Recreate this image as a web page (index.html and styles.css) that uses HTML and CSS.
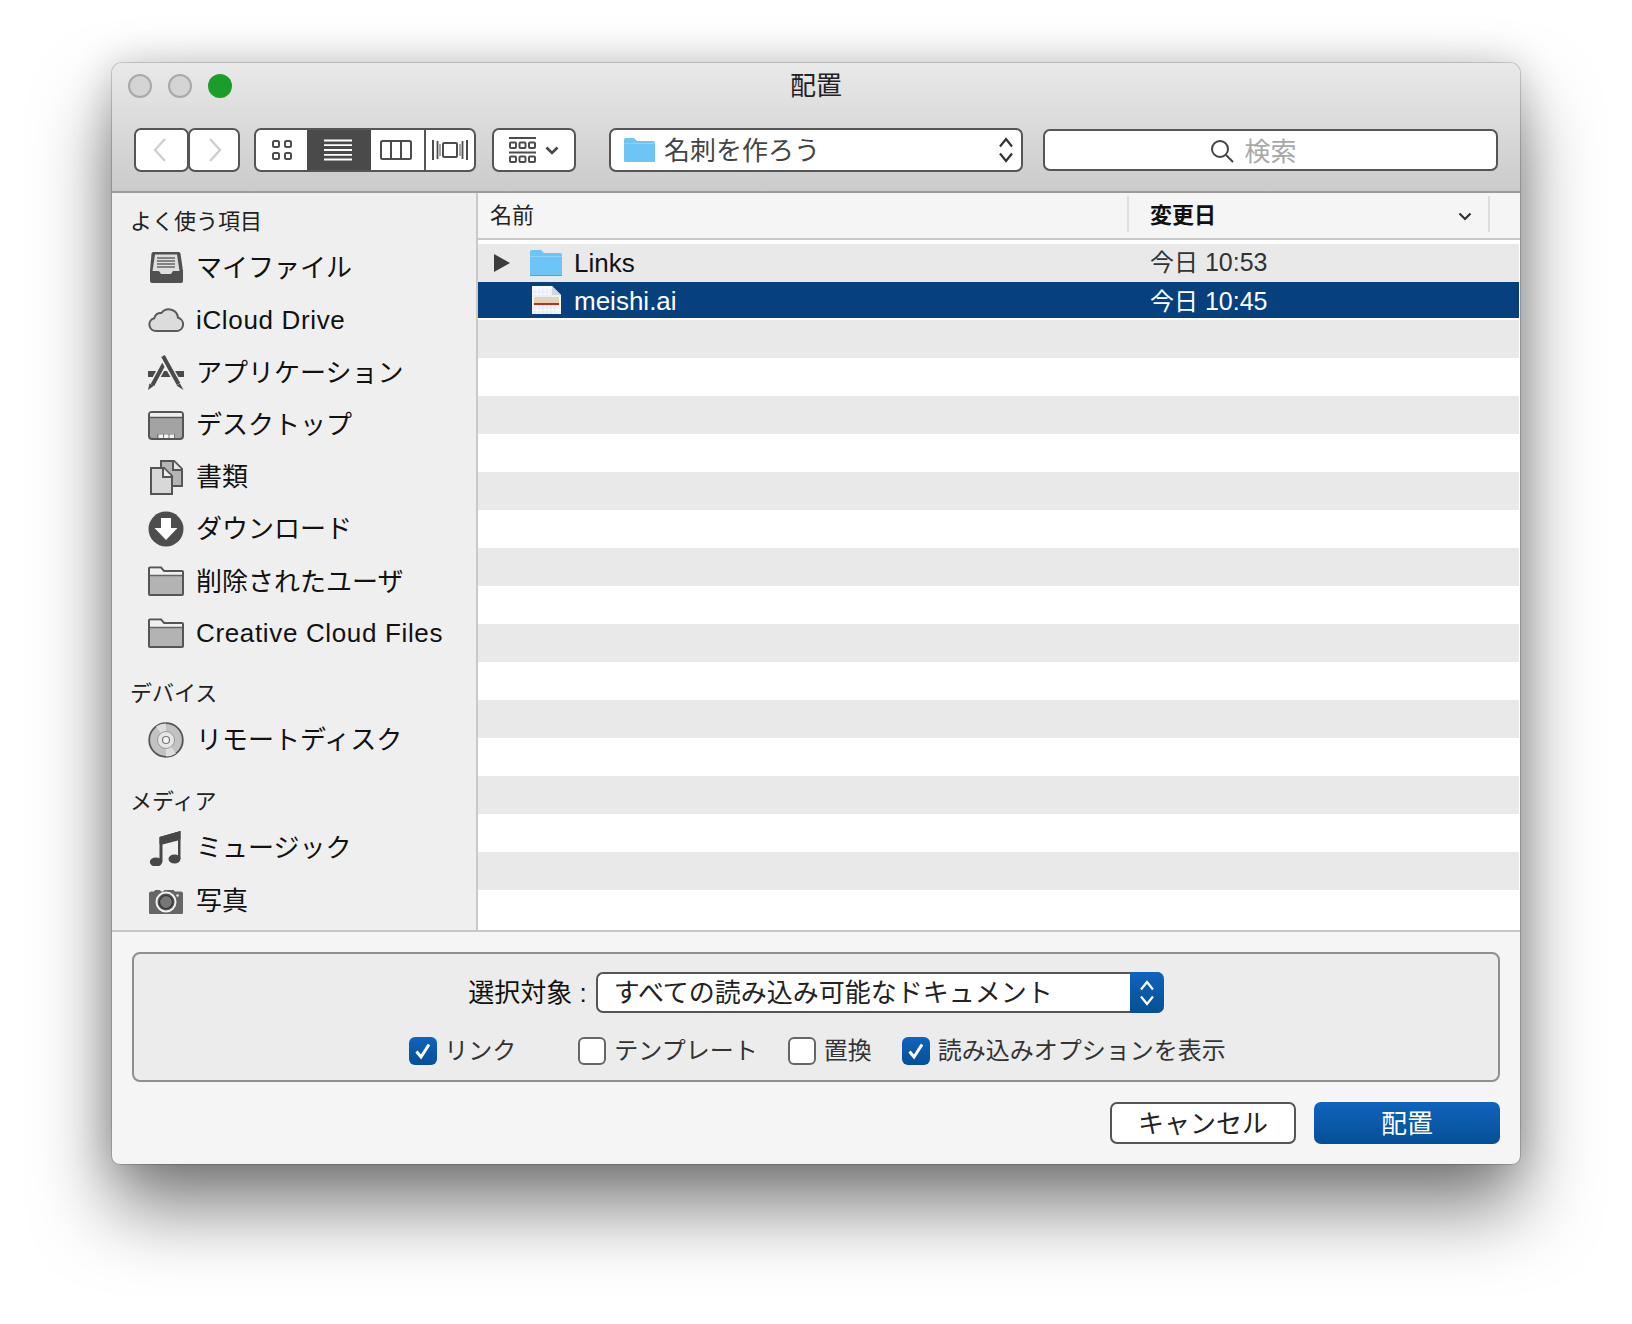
FILE: index.html
```html
<!DOCTYPE html>
<html lang="ja">
<head>
    <meta charset="UTF-8">
    <title>配置</title>
    <link rel="stylesheet" href="styles.css">
</head>
<body>
    <div class="window">
        <div class="titlebar">
            <div class="title-row">
                <div class="lights">
                    <span class="light"></span>
                    <span class="light"></span>
                    <span class="light green"></span>
                </div>
                <div class="title">配置</div>
            </div>
            <div class="toolbar">
                <div class="seg nav-back"><svg width="13" height="24" viewBox="0 0 13 24"><path d="M12 1L2 12l10 11" fill="none" stroke="#cfcfcf" stroke-width="2.4"/></svg></div>
                <div class="seg nav-fwd"><svg width="13" height="24" viewBox="0 0 13 24"><path d="M1 1l10 11L1 23" fill="none" stroke="#cfcfcf" stroke-width="2.4"/></svg></div>
                <div class="seg views">
                    <div class="seg-btn v1">
                        <svg width="20" height="20" viewBox="0 0 20 20" fill="none" stroke="#4c4c4c" stroke-width="2"><rect x="1" y="1" width="6" height="6" rx="1.5"/><rect x="13" y="1" width="6" height="6" rx="1.5"/><rect x="1" y="13" width="6" height="6" rx="1.5"/><rect x="13" y="13" width="6" height="6" rx="1.5"/></svg>
                    </div>
                    <div class="seg-btn v2 on">
                        <svg width="28" height="22" viewBox="0 0 28 22" stroke="#fff" stroke-width="1.8"><path d="M0 1.500h28M0 6.200h28M0 11h28M0 15.800h28M0 20.500h28"/></svg>
                    </div>
                    <div class="seg-btn v3">
                        <svg width="32" height="20" viewBox="0 0 32 20" fill="none" stroke="#4c4c4c" stroke-width="2"><rect x="1" y="1" width="30" height="18" rx="1.5"/><path d="M11 1v18M21 1v18"/></svg>
                    </div>
                    <div class="seg-btn v4">
                        <svg width="36" height="22" viewBox="0 0 36 22" fill="none" stroke="#4c4c4c" stroke-width="2"><rect x="11" y="4" width="14" height="14" rx="1"/><path d="M1 1v20M35 1v20"/><path d="M5.500 2v18M30.500 2v18" stroke-width="1.800"/><path d="M8 5v12M28 5v12" stroke-width="1"/></svg>
                    </div>
                </div>
                <div class="seg arrange">
                    <svg width="27" height="26" viewBox="0 0 27 26" fill="none" stroke="#4c4c4c" stroke-width="2"><path d="M0 1h27M0 15.500h27"/><rect x="1" y="5.500" width="6" height="5.500" rx="1"/><rect x="10.500" y="5.500" width="6" height="5.500" rx="1"/><rect x="20" y="5.500" width="6" height="5.500" rx="1"/><rect x="1" y="19.500" width="6" height="5.500" rx="1"/><rect x="10.500" y="19.500" width="6" height="5.500" rx="1"/><rect x="20" y="19.500" width="6" height="5.500" rx="1"/></svg>
                    <svg class="arrange-arrow" width="14" height="9" viewBox="0 0 14 9"><path d="M1.500 1.500L7 7l5.500-5.500" fill="none" stroke="#444" stroke-width="2.600"/></svg>
                </div>
                <div class="seg path-pop">
                    <svg width="31" height="24" viewBox="0 0 31 24"><path d="M1 24a1 1 0 0 1-1-1V2a2 2 0 0 1 2-2h8l3 3h16a2 2 0 0 1 2 2v18a1 1 0 0 1-1 1z" fill="#6dc5f6"/><path d="M0 5h31v1H0z" fill="#8ed4fa"/></svg>
                    <span class="path-name">名刺を作ろう</span>
                    <svg class="stepper" width="16" height="26" viewBox="0 0 16 26" fill="none" stroke="#333" stroke-width="2.200"><path d="M2 9.500L8 2l6 7.500M2 16.500L8 24l6-7.500"/></svg>
                </div>
                <div class="search">
                    <svg width="24" height="24" viewBox="0 0 24 24" fill="none" stroke="#444" stroke-width="2"><circle cx="10" cy="10" r="8"/><path d="M16 16l7 7"/></svg>
                    <span>検索</span>
                </div>
            </div>
        </div>

        <div class="content">
            <div class="sidebar">
                <div class="side-label">よく使う項目</div>
                <div class="side-item">
                    <svg class="side-icon" viewBox="0 0 36 36"><path d="M5.500 2h25a2 2 0 0 1 2 1.600L35 21v10a2 2 0 0 1-2 2H4a2 2 0 0 1-2-2V21L3.500 3.600a2 2 0 0 1 2-1.600z" fill="#505050"/><path d="M7 4.500h22l2.500 16.500H25l-2 3H13l-2-3H4.500z" fill="#dedede"/><path d="M9 8h18M9 11h18M9 14h18M9 17h18" stroke="#666" stroke-width="1.300"/></svg>
                    <span class="jp">マイファイル</span>
                </div>
                <div class="side-item">
                    <svg class="side-icon" viewBox="0 0 36 36"><path d="M8 29a6.500 6.500 0 0 1-1.700-12.800A6.200 6.200 0 0 1 13.500 11 9.200 9.200 0 0 1 30 15.800 6.700 6.700 0 0 1 28.500 29z" fill="#dcdcdc" stroke="#5a5a5a" stroke-width="2"/></svg>
                    <span class="latin">iCloud Drive</span>
                </div>
                <div class="side-item">
                    <svg class="side-icon" viewBox="0 0 36 36"><path d="M0 16h36v6H0z" fill="#4a4a4a"/><path d="M18.500 4L4.500 30" stroke="#efefef" stroke-width="7" fill="none"/><path d="M18.500 4L4.500 30" stroke="#4a4a4a" stroke-width="4" fill="none"/><path d="M0 35l1.500-6.500 4.500 2.300z" fill="#4a4a4a"/><path d="M15 2l15.500 27" stroke="#efefef" stroke-width="7" fill="none"/><path d="M15 1l15.500 28" stroke="#4a4a4a" stroke-width="4" fill="none"/><path d="M28.500 30.500l3.500-2 3.500 6.500z" fill="#4a4a4a"/></svg>
                    <span class="jp">アプリケーション</span>
                </div>
                <div class="side-item">
                    <svg class="side-icon" viewBox="0 0 36 36"><rect x="1" y="5" width="34" height="27" rx="3" fill="#a3a3a3" stroke="#555" stroke-width="2"/><path d="M2 6.500a2 2 0 0 1 2-.5h28a2 2 0 0 1 2 .5V10H2z" fill="#eee"/><path d="M2 10.500h32" stroke="#555" stroke-width="1.500"/><path d="M9 27h18v4H9z" fill="#777"/><path d="M10.500 27.500h4.500V31h-4.500zM16 27.500h4.500V31H16zM21.500 27.500H26V31h-4.500z" fill="#f4f4f4"/></svg>
                    <span class="jp">デスクトップ</span>
                </div>
                <div class="side-item">
                    <svg class="side-icon" viewBox="0 0 36 36"><path d="M13 2h13l8 8v17H13z" fill="#b5b5b5" stroke="#555" stroke-width="2"/><path d="M25 2v9h9" fill="#e5e5e5" stroke="#555" stroke-width="2"/><path d="M3 9h13l8 8v18H3z" fill="#d8d8d8" stroke="#555" stroke-width="2"/><path d="M15 9v9h9" fill="#eee" stroke="#555" stroke-width="2"/></svg>
                    <span class="jp">書類</span>
                </div>
                <div class="side-item">
                    <svg class="side-icon" viewBox="0 0 36 36"><circle cx="18" cy="18" r="17.500" fill="#4d4d4d"/><path d="M13 7h10v10h6.500L18 29 6.500 17H13z" fill="#fff"/></svg>
                    <span class="jp">ダウンロード</span>
                </div>
                <div class="side-item">
                    <svg class="side-icon" viewBox="0 0 36 36"><use href="#gray-folder"/></svg>
                    <span class="jp">削除されたユーザ</span>
                </div>
                <div class="side-item">
                    <svg class="side-icon" viewBox="0 0 36 36"><use href="#gray-folder"/></svg>
                    <span class="latin">Creative Cloud Files</span>
                </div>

                <div class="side-label second">デバイス</div>
                <div class="side-item">
                    <svg class="side-icon" viewBox="0 0 36 36"><circle cx="18" cy="18" r="16.800" fill="#c2c2c2" stroke="#555" stroke-width="1.800"/><path d="M18 18L8 4.500A17 17 0 0 1 18 1.500zM18 18l10 13.500A17 17 0 0 1 18 34.500z" fill="#dedede"/><circle cx="18" cy="18" r="8.500" fill="#e6e6e6" stroke="#999" stroke-width="1"/><circle cx="18" cy="18" r="3.500" fill="#f5f5f5" stroke="#777" stroke-width="1.200"/></svg>
                    <span class="jp">リモートディスク</span>
                </div>

                <div class="side-label third">メディア</div>
                <div class="side-item">
                    <svg class="side-icon" viewBox="0 0 36 36"><path d="M11.500 7L32.500 1v28H30V10.500L14.500 14.500V32h-3z" fill="#474747"/><path d="M11.500 7L32.500 1v8L11.500 14z" fill="#474747"/><ellipse cx="8" cy="32" rx="6.200" ry="4.500" fill="#474747"/><ellipse cx="26.500" cy="29" rx="6" ry="4.500" fill="#474747"/></svg>
                    <span class="jp">ミュージック</span>
                </div>
                <div class="side-item">
                    <svg class="side-icon" viewBox="0 0 36 36"><path d="M1 10a2 2 0 0 1 2-1.500h3l1-1.500h5l1 1.500h2l1.500-1.500h9l1.500 1.500H33a2 2 0 0 1 2 1.500V30a1 1 0 0 1-1 1H2a1 1 0 0 1-1-1z" fill="#666"/><circle cx="18" cy="19" r="9.500" fill="#555" stroke="#f2f2f2" stroke-width="2"/><circle cx="18" cy="19" r="6.500" fill="#777" stroke="#333" stroke-width="1.200"/><circle cx="29.500" cy="12.500" r="1.200" fill="#eee"/></svg>
                    <span class="jp">写真</span>
                </div>
            </div>

            <div class="files">
                <div class="col-head">
                    <div class="col-name">名前</div>
                    <div class="col-date">
                        <span>変更日</span>
                        <svg class="sort" width="14" height="9" viewBox="0 0 14 9"><path d="M1.500 1.500L7 7l5.500-5.500" fill="none" stroke="#333" stroke-width="2.200"/></svg>
                    </div>
                    <div class="col-rest"></div>
                </div>
                <div class="rows">
                    <div class="row">
                        <div class="cell-name">
                            <svg class="disclose" width="16" height="18" viewBox="0 0 16 18"><path d="M0 0l16 9-16 9z" fill="#3c3c3c"/></svg>
                            <svg class="file-icon" width="32" height="26" viewBox="0 0 32 26"><path d="M1 26a1 1 0 0 1-1-1V2a2 2 0 0 1 2-2h9l3 3h16a2 2 0 0 1 2 2v20a1 1 0 0 1-1 1z" fill="#6dc5f6"/><path d="M0 6h32v1H0z" fill="#8ed4fa"/><path d="M0 25h32v1H0z" fill="#4ea4d8"/></svg>
                            <span>Links</span>
                        </div>
                        <div class="cell-date">今日<span class="time"> 10:53</span></div>
                    </div>
                    <div class="row selected">
                        <div class="cell-name">
                            <span class="disclose-gap"></span>
                            <svg class="file-icon" width="32" height="28" viewBox="0 0 32 28"><path d="M2 0h20l9 9v19H2z" fill="#f7f9fc"/><path d="M5 3v25M9 3v25M13 3v25M17 3v25M21 3v25M25 10v18M2 6h18M2 10h29M2 14h29M2 18h29M2 22h29M2 26h29" stroke="#dbe4f1" stroke-width=".7"/><path d="M22 0v9h9z" fill="#d2d5da"/><path d="M4 11h25v6H4z" fill="#e6d3b5"/><path d="M4 17h25v2H4z" fill="#c42a22"/></svg>
                            <span>meishi.ai</span>
                        </div>
                        <div class="cell-date">今日<span class="time"> 10:45</span></div>
                    </div>
                    <div class="row"></div><div class="row"></div><div class="row"></div><div class="row"></div>
                    <div class="row"></div><div class="row"></div><div class="row"></div><div class="row"></div>
                    <div class="row"></div><div class="row"></div><div class="row"></div><div class="row"></div>
                    <div class="row"></div><div class="row"></div><div class="row"></div><div class="row"></div>
                </div>
            </div>
        </div>

        <div class="panel">
            <div class="options">
                <div class="target">
                    <span class="target-label">選択対象 :</span>
                    <div class="target-pop">
                        <span class="target-text">すべての読み込み可能なドキュメント</span>
                        <div class="target-step">
                            <svg width="16" height="26" viewBox="0 0 16 26" fill="none" stroke="#fff" stroke-width="2.200"><path d="M2 9.500L8 2l6 7.500M2 16.500L8 24l6-7.500"/></svg>
                        </div>
                    </div>
                </div>
                <div class="checks">
                    <label class="check first"><span class="box on"><svg width="20" height="20" viewBox="0 0 20 20"><path d="M3.500 10.500L8 16l8-12.500" fill="none" stroke="#fff" stroke-width="3"/></svg></span><span class="check-text">リンク</span></label>
                    <label class="check"><span class="box"></span><span class="check-text">テンプレート</span></label>
                    <label class="check"><span class="box"></span><span class="check-text">置換</span></label>
                    <label class="check"><span class="box on"><svg width="20" height="20" viewBox="0 0 20 20"><path d="M3.500 10.500L8 16l8-12.500" fill="none" stroke="#fff" stroke-width="3"/></svg></span><span class="check-text">読み込みオプションを表示</span></label>
                </div>
            </div>
            <div class="buttons">
                <div class="btn">キャンセル</div>
                <div class="btn primary">配置</div>
            </div>
        </div>
    </div>

    <svg class="defs" width="0" height="0">
        <g id="gray-folder">
            <path d="M2 3.500h11l3 3.500h18a1 1 0 0 1 1 1v22a1 1 0 0 1-1 1H2a1 1 0 0 1-1-1V4.500a1 1 0 0 1 1-1z" fill="#b3b3b3" stroke="#555" stroke-width="2"/>
            <path d="M2 4.500h10.500l3 3.500H34v3H2z" fill="#f0f0f0"/>
            <path d="M2 11.500h32" stroke="#666" stroke-width="1.500"/>
        </g>
    </svg>
</body>
</html>
```

FILE: styles.css
```css
* {
    box-sizing: border-box;
}

body {
    margin: 0;
    padding: 63px 112px 0;
    height: 1324px;
    overflow: hidden;
    background-color: #ffffff;
    font-family: "Liberation Sans", "Noto Sans CJK JP", sans-serif;
    color: #111;
}

.window {
    width: 1408px;
    height: 1101px;
    display: flex;
    flex-direction: column;
    border-radius: 10px 10px 8px 8px;
    background-color: #f5f5f5;
    box-shadow: 0 0 0 1px rgba(0, 0, 0, 0.16), 0 44px 76px rgba(0, 0, 0, 0.5), 0 0 40px rgba(0, 0, 0, 0.18);
}

.titlebar {
    height: 130px;
    flex: none;
    border-radius: 10px 10px 0 0;
    border-bottom: 2px solid #9c9c9c;
    background: linear-gradient(#e9e9e9, #cbcbcb);
}

.title-row {
    height: 65px;
    display: flex;
    align-items: center;
    position: relative;
    padding-left: 16px;
}

.lights {
    display: flex;
    gap: 16px;
    margin-top: -19px;
}

.light {
    width: 24px;
    height: 24px;
    border-radius: 50%;
    border: 2px solid #a8a8a8;
    background-color: #d4d4d4;
}

.light.green {
    border: none;
    background-color: #1a9e28;
}

.title {
    position: absolute;
    left: 0;
    right: 0;
    top: 5px;
    text-align: center;
    font-size: 26px;
    line-height: 36px;
    color: #222;
}

.toolbar {
    display: flex;
    padding-left: 22px;
    height: 44px;
}

.seg {
    height: 44px;
    display: flex;
    align-items: center;
    justify-content: center;
    border: 2px solid #555;
    border-radius: 7px;
    background-color: #fff;
    flex: none;
}

.seg-btn {
    height: 100%;
    display: flex;
    align-items: center;
    justify-content: center;
}

.nav-back {
    width: 55px;
    padding-right: 5px;
}

.nav-fwd {
    width: 52px;
    margin-left: -1px;
    padding-left: 3px;
}

.views {
    width: 222px;
    margin-left: 14px;
    overflow: hidden;
}

.v1 {
    width: 51px;
}

.v2 {
    width: 64px;
    padding-right: 2px;
}

.v3 {
    width: 53px;
    padding-right: 3px;
}

.v4 {
    width: 50px;
    border-left: 2px solid #555;
}

.on {
    background-color: #4a4a4a;
}

.arrange {
    width: 84px;
    margin-left: 16px;
}

.arrange-arrow {
    margin-left: 9px;
}

.path-pop {
    width: 414px;
    margin-left: 33px;
    justify-content: flex-start;
    padding-left: 13px;
}

.path-name {
    margin-left: 9px;
    padding-top: 2px;
    font-size: 26px;
    line-height: 36px;
    color: #444;
}

.stepper {
    margin-left: auto;
    margin-right: 7px;
}

.search {
    width: 455px;
    height: 42px;
    margin: 1px 0 0 20px;
    display: flex;
    align-items: center;
    justify-content: center;
    gap: 10px;
    padding-right: 34px;
    padding-bottom: 2px;
    border: 2px solid #555;
    border-radius: 7px;
    background-color: #fff;
    font-size: 26px;
    color: #a8a8a8;
}

.search svg {
    margin-top: 3px;
}

.content {
    flex: 1;
    display: flex;
    min-height: 0;
    border-bottom: 2px solid #c6c6c6;
}

.sidebar {
    width: 366px;
    flex: none;
    padding-top: 8px;
    background-color: #efefef;
    border-right: 2px solid #c9c9c9;
}

.side-label {
    height: 41px;
    padding-left: 18px;
    font-size: 22px;
    line-height: 41px;
    color: #222;
}

.side-label.second {
    margin-top: 13px;
}

.side-label.third {
    margin-top: 15px;
}

.side-item {
    height: 52.25px;
    display: flex;
    align-items: center;
    padding-left: 36px;
    font-size: 26px;
    color: #111;
}

.side-icon {
    width: 36px;
    height: 36px;
    margin-right: 12px;
    flex: none;
}

.jp {
    padding-bottom: 5px;
}

.latin {
    letter-spacing: 0.65px;
}

.files {
    flex: 1;
    min-width: 0;
    background-color: #fff;
}

.col-head {
    height: 47px;
    display: flex;
    align-items: center;
    padding-bottom: 3px;
    border-bottom: 2px solid #c8c8c8;
    background-color: #f5f5f5;
    font-size: 22px;
    color: #222;
}

.col-name {
    width: 649px;
    padding-left: 12px;
    padding-bottom: 2px;
}

.col-date {
    width: 363px;
    height: 36px;
    display: flex;
    align-items: center;
    justify-content: space-between;
    padding: 0 16px 0 21px;
    font-weight: bold;
    color: #111;
    border-left: 2px solid #dedede;
    border-right: 2px solid #dedede;
}

.col-date span {
    padding-bottom: 2px;
}

.sort {
    margin-top: 5px;
}

.rows {
    padding-top: 4px;
    padding-right: 1px;
}

.row {
    height: 38px;
    display: flex;
    align-items: center;
    font-size: 26px;
}

.row:nth-child(odd) {
    background-color: #e9e9e9;
}

.row.selected {
    background-color: #06417e;
    background-clip: padding-box;
    border-bottom: 2px solid #fff;
    color: #fff;
}

.cell-name {
    width: 649px;
    display: flex;
    align-items: center;
    padding-left: 16px;
}

.selected .cell-name span:last-child {
    padding-top: 2px;
}

.disclose {
    margin-right: 20px;
}

.disclose-gap {
    width: 16px;
    margin-right: 20px;
}

.file-icon {
    margin-right: 12px;
}

.cell-date {
    padding-left: 23px;
    padding-bottom: 6px;
    font-size: 24px;
    color: #333;
}

.time {
    font-size: 25px;
}

.selected .cell-date {
    padding-bottom: 2px;
    color: #fff;
}

.panel {
    flex: none;
    height: 232px;
    padding: 20px 20px 0;
}

.options {
    height: 130px;
    padding-top: 18px;
    border: 2px solid #8f8f8f;
    border-radius: 8px;
    background-color: #ececec;
}

.target {
    display: flex;
    justify-content: center;
    align-items: center;
    gap: 9px;
    font-size: 26px;
}

.target-label {
    padding-bottom: 4px;
}

.target-pop {
    width: 568px;
    height: 41px;
    display: flex;
    align-items: center;
    border: 2px solid #555;
    border-right: none;
    border-radius: 7px;
    background-color: #fff;
}

.target-text {
    flex: 1;
    padding-left: 16px;
    padding-bottom: 4px;
    color: #222;
}

.target-step {
    width: 34px;
    height: 41px;
    margin: -2px 0;
    display: flex;
    align-items: center;
    justify-content: center;
    border-radius: 0 7px 7px 0;
    background: linear-gradient(#1063bd, #054f96);
}

.checks {
    display: flex;
    justify-content: center;
    gap: 30px;
    height: 28px;
    margin-top: 24px;
    padding-left: 3px;
    font-size: 24px;
    color: #333;
}

.check {
    display: flex;
    align-items: center;
    gap: 8px;
}

.check.first {
    gap: 7px;
    margin-right: 32px;
}

.check-text {
    line-height: 28px;
}

.box {
    width: 28px;
    height: 28px;
    display: flex;
    align-items: center;
    justify-content: center;
    border: 2px solid #666;
    border-radius: 6px;
    background-color: #fff;
}

.box.on {
    border: none;
    background: linear-gradient(#1063bd, #054f96);
}

.buttons {
    display: flex;
    justify-content: flex-end;
    gap: 18px;
    margin-top: 20px;
}

.btn {
    width: 186px;
    height: 42px;
    display: flex;
    align-items: center;
    justify-content: center;
    padding-bottom: 4px;
    border: 2px solid #555;
    border-radius: 7px;
    background-color: #fff;
    font-size: 26px;
    color: #222;
}

.btn.primary {
    border: none;
    background: linear-gradient(#1063bd, #054f96);
    color: #fff;
}

.defs {
    position: absolute;
}
```
